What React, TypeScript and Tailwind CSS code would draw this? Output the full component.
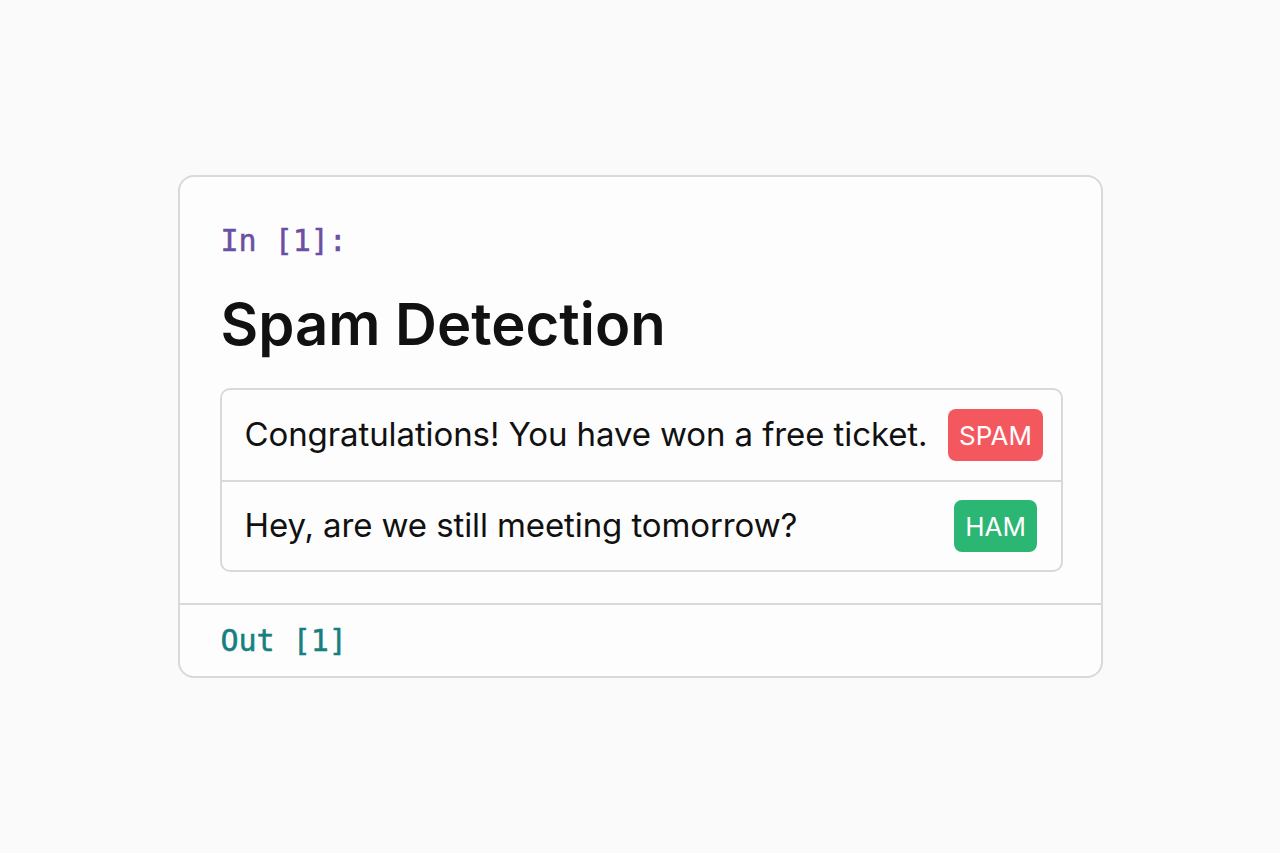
import React from "react";

const rows = [
  { text: "Congratulations! You have won a free ticket.", label: "SPAM", tone: "bg-[#f4585f]" },
  { text: "Hey, are we still meeting tomorrow?", label: "HAM", tone: "bg-[#2bb673]" },
];

export default function App() {
  return (
    <div className="min-h-screen bg-[#fafafa] flex items-center justify-center font-['Inter',sans-serif]">
      <div className="w-[925px] rounded-[16px] border-2 border-[#d9d9d9] bg-[#fdfdfd]">
        {/* input cell */}
        <div className="pl-[41px] pr-[38px] pt-[46px] pb-[31px]">
          <div className="font-['DejaVu_Sans_Mono',monospace] text-[30px] leading-[36px] text-[#6b4fa3] [-webkit-text-stroke:0.5px_#6b4fa3]">
            In [1]:
          </div>
          <h1 className="mt-[32px] text-[58px] leading-[66px] font-semibold text-[#111]">
            Spam Detection
          </h1>
          <div className="mt-[31px] -ml-[1px] rounded-[10px] border-2 border-[#d9d9d9]">
            {rows.map((r, i) => (
              <div
                key={r.label}
                className={`flex items-center justify-between h-[90px] pl-[23px] pr-[17px] ${i > 0 ? "border-t-2 border-[#d9d9d9]" : ""}`}
              >
                <span className="text-[33px] text-[#111] tracking-[-0.1px]">{r.text}</span>
                <div className="w-[96px] flex justify-center">
                  <span className={`${r.tone} rounded-[8px] px-[11px] h-[52px] flex items-center text-[26px] text-white`}>
                    {r.label}
                  </span>
                </div>
              </div>
            ))}
          </div>
        </div>
        {/* output */}
        <div className="border-t-2 border-[#d9d9d9] px-[41px] h-[73px] flex items-center">
          <span className="font-['DejaVu_Sans_Mono',monospace] text-[30px] text-[#16807f] [-webkit-text-stroke:0.5px_#16807f]">
            Out [1]
          </span>
        </div>
      </div>
    </div>
  );
}
